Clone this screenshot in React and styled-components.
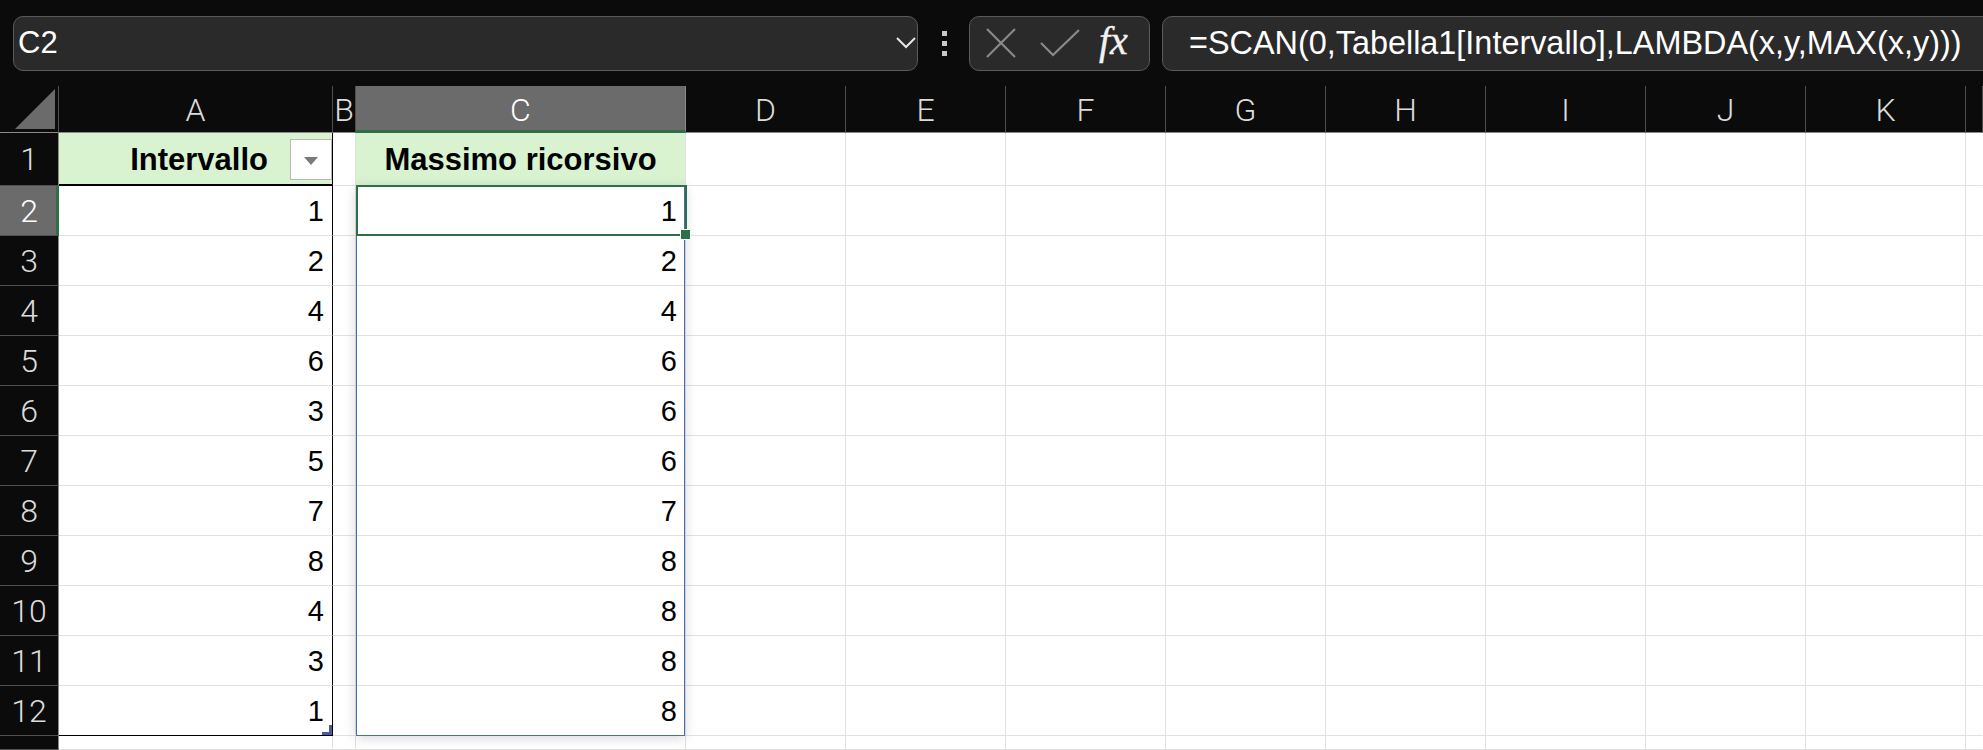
import styled, { createGlobalStyle } from "styled-components"

const GlobalStyle = createGlobalStyle`
  html, body {
    margin: 0;
    padding: 0;
    background: #fff;
    overflow: hidden;
  }
  * { box-sizing: border-box; }
`

const GREEN = "#2d6f47"
const GRID = "#e1e1e1"
const UI_FONT = `"Liberation Sans", Arial, sans-serif`
const HEAD_FONT = `Roboto, "Liberation Sans", sans-serif`

const Page = styled.div`
  width: 1983px;
  height: 750px;
  display: flex;
  flex-direction: column;
  background: #fff;
  overflow: hidden;
`

const Toolbar = styled.div`
  height: 86px;
  flex: none;
  background: #0b0b0b;
  display: flex;
  align-items: center;
  padding-left: 13px;
  overflow: hidden;
`

const Box = styled.div`
  height: 55px;
  background: #2a2a2a;
  border: 1px solid #5a5a5a;
  border-radius: 10px;
  display: flex;
  align-items: center;
  flex: none;
`

const NameBox = styled(Box)`
  width: 905px;
  padding-left: 4px;
  justify-content: space-between;
  font-family: ${UI_FONT};
  font-size: 31px;
  color: #fff;
`

const Chevron = styled.svg`
  width: 20px;
  height: 14px;
  margin-right: 1px;
`

const Dots = styled.div`
  width: 5px;
  margin: 0 22px 0 24px;
  display: flex;
  flex-direction: column;
  gap: 5px;
  span {
    display: block;
    width: 5px;
    height: 5px;
    background: #c8c8c8;
  }
`

const FxGroup = styled(Box)`
  width: 181px;
  padding-left: 16px;
  gap: 24px;
  margin-right: 12px;
`

const Fx = styled.span`
  font-family: "Liberation Serif", "Times New Roman", serif;
  font-style: italic;
  font-size: 40px;
  color: #f2f2f2;
  margin-left: -5px;
  line-height: 1;
  padding-bottom: 4px;
  -webkit-text-stroke: 0.4px #f2f2f2;
`

const FormulaBox = styled(Box)`
  width: 900px;
  padding-left: 26px;
  font-family: ${UI_FONT};
  font-size: 32.4px;
  color: #fff;
  white-space: nowrap;
`

const Sheet = styled.div`
  flex: 1;
  display: grid;
  grid-template-columns: 59px 274px 23px 330px repeat(8, 160px) 1fr;
  grid-template-rows: 47px 53px repeat(11, 50px) 1fr;
`

const Slot = styled.div`
  grid-row: ${(p) => p.$r};
  grid-column: ${(p) => p.$c};
`

const Corner = styled(Slot)`
  background: #0b0b0b;
  border-right: 1px solid #505050;
  border-bottom: 1px solid #8a8a8a;
  display: flex;
  align-items: flex-end;
  justify-content: flex-end;
  padding: 0 3px 3px 0;
`

const ColHead = styled(Slot)`
  background: ${(p) => (p.$selected ? "#6b6b6b" : "#0b0b0b")};
  color: ${(p) => (p.$selected ? "#fff" : "#dcdcdc")};
  border-right: 1px solid ${(p) => (p.$selected ? "#8a8a8a" : "#4e4e4e")};
  border-bottom: ${(p) => (p.$selected ? `3px solid ${GREEN}` : "1px solid #8a8a8a")};
  font-family: ${HEAD_FONT};
  font-weight: 300;
  font-size: 32px;
  display: flex;
  align-items: center;
  justify-content: center;
  padding-top: ${(p) => (p.$selected ? "4px" : "2px")};
`

const RowHead = styled(Slot)`
  background: ${(p) => (p.$selected ? "#6b6b6b" : "#0b0b0b")};
  color: ${(p) => (p.$selected ? "#fff" : "#dcdcdc")};
  border-bottom: 1px solid #505050;
  border-right: ${(p) => (p.$selected ? `3px solid ${GREEN}` : "1px solid #8a8a8a")};
  font-family: ${HEAD_FONT};
  font-weight: 300;
  font-size: 32px;
  display: flex;
  align-items: center;
  justify-content: center;
  padding-left: ${(p) => (p.$selected ? "2px" : "0")};
`

const Cell = styled(Slot)`
  background: ${(p) => p.$bg || "#fff"};
  border-right: 1px solid ${(p) => p.$right || GRID};
  border-bottom: ${(p) => p.$bottom || `1px solid ${GRID}`};
  font-family: ${UI_FONT};
  font-size: 29px;
  font-weight: ${(p) => (p.$bold ? 700 : 400)};
  color: #000;
  display: flex;
  align-items: center;
  justify-content: ${(p) => p.$align || "flex-end"};
  padding-right: ${(p) => (p.$align === "center" ? "0" : "8px")};
  padding-top: 2px;
  position: relative;
`

const HeaderCell = styled(Cell)`
  padding-right: 0;
  gap: 22px;
  font-size: 31px;
`

const FilterButton = styled.div`
  width: 42px;
  height: 41px;
  background: #fff;
  border: 1px solid #b8b8b8;
  display: flex;
  align-items: center;
  justify-content: center;
  &::after {
    content: "";
    border-left: 7px solid transparent;
    border-right: 7px solid transparent;
    border-top: 8px solid #7a7a7a;
    margin-top: 2px;
  }
`

const ResizeMark = styled.span`
  position: absolute;
  right: 0;
  bottom: 0;
  width: 10px;
  height: 10px;
  background: #4b57a8;
  clip-path: polygon(100% 0, 100% 100%, 0 100%, 0 70%, 70% 70%, 70% 0);
`

const SpillRange = styled.div`
  grid-column: 4;
  grid-row: 3 / 14;
  border: 1px solid #4a6cb3;
  margin-right: 1px;
  box-shadow: 0 2px 12px rgba(0, 0, 0, 0.16);
  position: relative;
  z-index: 1;
  pointer-events: none;
`

const Selection = styled.div`
  grid-column: 4;
  grid-row: 3;
  margin: -1px -1px 0 0;
  border: 2px solid ${GREEN};
  position: relative;
  z-index: 2;
  pointer-events: none;
  &::after {
    content: "";
    position: absolute;
    right: -6px;
    bottom: -6px;
    width: 9px;
    height: 9px;
    background: ${GREEN};
    border: 1px solid #fff;
  }
`

const columns = ["A", "B", "C", "D", "E", "F", "G", "H", "I", "J", "K", ""]
const intervallo = [1, 2, 4, 6, 3, 5, 7, 8, 4, 3, 1]
const massimo = [1, 2, 4, 6, 6, 6, 7, 8, 8, 8, 8]

function XIcon() {
  return (
    <svg width="30" height="30" viewBox="0 0 30 30">
      <path d="M1 1 L29 29 M29 1 L1 29" stroke="#8a8a8a" strokeWidth="2.2" fill="none" />
    </svg>
  )
}

function CheckIcon() {
  return (
    <svg width="40" height="28" viewBox="0 0 40 28">
      <path d="M1 14 L13 26 L39 1" stroke="#8a8a8a" strokeWidth="2.2" fill="none" />
    </svg>
  )
}

function SelectAll() {
  return (
    <svg width="40" height="40" viewBox="0 0 40 40">
      <polygon points="40,0 40,40 0,40" fill="#6b6b6b" />
    </svg>
  )
}

function renderRow(r) {
  // r is the sheet row number 1..13, grid row is r + 1
  const gr = r + 1
  const cells = columns.map((col, i) => {
    const gc = i + 2
    const key = `${col || "L"}${r}`
    if (col === "A") {
      if (r === 1) {
        return (
          <HeaderCell key={key} $r={gr} $c={gc} $bg="#d9f2d0" $bold $right="#000" $bottom="2px solid #000">
            Intervallo
            <FilterButton />
          </HeaderCell>
        )
      }
      if (r <= 12) {
        return (
          <Cell key={key} $r={gr} $c={gc} $right="#000" $bottom={r === 12 ? "1px solid #000" : undefined}>
            {intervallo[r - 2]}
            {r === 12 && <ResizeMark />}
          </Cell>
        )
      }
    }
    if (col === "C") {
      if (r === 1) {
        return (
          <HeaderCell key={key} $r={gr} $c={gc} $bg="#d9f2d0" $bold $align="center">
            Massimo ricorsivo
          </HeaderCell>
        )
      }
      if (r <= 12) {
        return (
          <Cell key={key} $r={gr} $c={gc}>
            {massimo[r - 2]}
          </Cell>
        )
      }
    }
    return <Cell key={key} $r={gr} $c={gc} $right={i === columns.length - 1 ? "transparent" : undefined} />
  })
  return [
    <RowHead key={`h${r}`} $r={gr} $c={1} $selected={r === 2}>
      {r <= 12 ? r : null}
    </RowHead>,
    ...cells,
  ]
}

export default function App() {
  const rows = Array.from({ length: 13 }, (_, i) => i + 1)
  return (
    <>
      <GlobalStyle />
      <Page>
        <Toolbar>
          <NameBox>
            C2
            <Chevron viewBox="0 0 20 14">
              <path d="M1 2 L10 11 L19 2" stroke="#e6e6e6" strokeWidth="2" fill="none" />
            </Chevron>
          </NameBox>
          <Dots>
            <span />
            <span />
            <span />
          </Dots>
          <FxGroup>
            <XIcon />
            <CheckIcon />
            <Fx>fx</Fx>
          </FxGroup>
          <FormulaBox>=SCAN(0,Tabella1[Intervallo],LAMBDA(x,y,MAX(x,y)))</FormulaBox>
        </Toolbar>
        <Sheet>
          <Corner $r={1} $c={1}>
            <SelectAll />
          </Corner>
          {columns.map((c, i) => (
            <ColHead key={`c${i}`} $r={1} $c={i + 2} $selected={c === "C"}>
              {c}
            </ColHead>
          ))}
          {rows.map((r) => renderRow(r))}
          <SpillRange />
          <Selection />
        </Sheet>
      </Page>
    </>
  )
}
